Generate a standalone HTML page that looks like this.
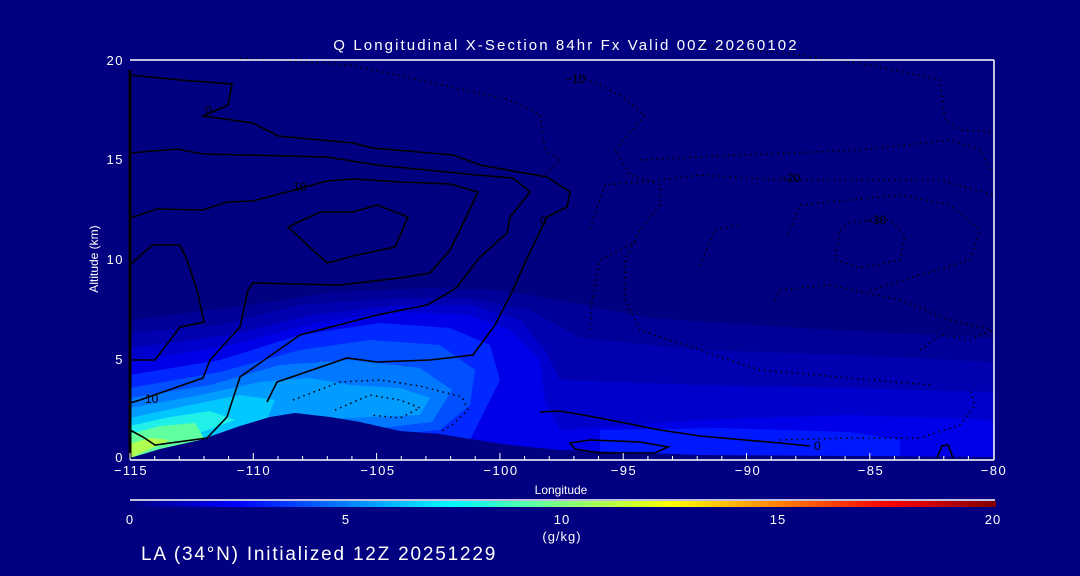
<!DOCTYPE html>
<html><head><meta charset="utf-8"><style>
html,body{margin:0;padding:0;background:#000080;}
svg{display:block}
text{font-family:"Liberation Sans",sans-serif;fill:#fff}
</style></head><body>
<svg width="1080" height="576" viewBox="0 0 1080 576" xmlns="http://www.w3.org/2000/svg">
<defs>
<linearGradient id="cb" x1="0" x2="1" y1="0" y2="0">
<stop offset="0" stop-color="#000080"/>
<stop offset="0.125" stop-color="#0000ff"/>
<stop offset="0.375" stop-color="#00ffff"/>
<stop offset="0.5" stop-color="#7fff7f"/>
<stop offset="0.625" stop-color="#ffff00"/>
<stop offset="0.875" stop-color="#ff0000"/>
<stop offset="1" stop-color="#800000"/>
</linearGradient>
</defs>
<rect width="1080" height="576" fill="#000080"/>
<g stroke="none">
<polygon fill="#000098" points="130,320 250,305 330,292 430,288 500,290 560,300 650,318 800,328 993,338 993,458 130,458"/>
<polygon fill="#0000b0" points="130,333 220,325 300,305 400,298 470,298 530,310 580,338 700,350 850,355 993,362 993,458 130,458"/>
<polygon fill="#0000cc" points="130,348 230,335 310,315 400,305 470,305 520,320 545,350 560,380 700,385 850,388 993,392 993,458 130,458"/>
<polygon fill="#0000e8" points="130,362 230,345 320,322 400,312 470,315 510,330 540,360 545,400 560,430 700,420 850,415 993,420 993,458 130,458"/>
<polygon fill="#0018ff" points="600,430 720,428 850,432 900,440 900,458 600,458"/>
<polygon fill="#0028ff" points="130,375 220,360 300,335 380,323 450,328 490,345 500,380 480,420 470,440 130,458"/>
<polygon fill="#0050ff" points="130,388 220,372 300,350 370,340 440,345 475,370 470,405 440,430 130,458"/>
<polygon fill="#0078ff" points="130,398 210,385 280,365 350,360 420,368 452,390 432,422 130,458"/>
<polygon fill="#009cff" points="130,408 200,395 260,382 310,378 350,385 400,388 430,398 420,415 300,420 130,458"/>
<polygon fill="#00c8ff" points="130,418 190,405 240,395 275,400 265,425 130,458"/>
<polygon fill="#20f0e8" points="130,426 170,417 210,411 235,420 130,458"/>
<polygon fill="#60ffa0" points="130,434 160,426 195,423 205,440 130,458"/>
<polygon fill="#b0ff50" points="130,444 150,438 170,440 130,458"/>
<polygon fill="#000080" points="130,458 160,449 200,440 240,426 270,417 295,413 330,417 360,422 400,431 440,434 470,439 510,445 560,450 700,455 993,457 993,461 130,461"/>
</g>
<g fill="none" stroke="#000" stroke-width="1.6">
<polyline points="130,75 180,80 232,84 228,105 203,116 253,123 278,136 353,143 373,148 453,155 480,165 547,177 570,192 567,207 547,217 523,267 513,290 495,325 473,355 430,360 377,362 347,358 312,370 277,382 267,402"/>
<polyline points="130,153 177,149 203,154 327,157 377,165 427,170 477,175 513,178 530,192 510,217 507,233 480,257 457,287 453,290 427,305 377,315 300,335 240,377 227,417 207,438 155,445 143,437 130,430"/>
<polyline points="130,218 157,209 203,210 227,202 253,201 283,193 327,181 353,179 400,182 450,184 478,192 460,230 450,250 430,273 400,278 340,285 253,283 248,290 240,327 210,360 203,378 160,393 140,400 130,403"/>
<polygon points="288,227 320,212 353,212 377,205 408,217 395,247 357,255 327,263"/>
<polyline points="130,265 152,245 180,245 187,260 197,290 204,322 180,327 155,360 130,360"/>
<polyline points="540,412 560,411 600,418 660,430 700,436 780,443 810,446"/>
<polygon points="570,443 590,440 640,442 668,447 655,453 600,453 575,449"/>
<polyline points="937,458 942,446 948,445 953,458"/>
<line x1="130" y1="70" x2="130" y2="458" stroke-width="3"/>
</g>
<g fill="none" stroke="#000" stroke-width="1.5" stroke-dasharray="1.5 4">
<polyline points="240,58 350,65 420,80 510,100 540,115 545,150 560,160 545,175"/>
<polyline points="585,78 620,95 645,115 615,150 630,175 660,185 660,205 640,230 625,260 625,300 640,330 700,350 760,370 850,378 930,385"/>
<polyline points="700,45 800,55 870,65 940,80 945,120 960,130 993,132"/>
<polyline points="640,160 740,155 860,150 950,140 980,150 990,170"/>
<polyline points="590,228 605,185 660,180 700,175 780,180 850,180 940,180 993,195"/>
<polyline points="788,235 800,205 900,195 950,205 980,230 970,260 920,275 870,290"/>
<polygon points="840,230 850,222 890,220 905,235 900,260 860,268 835,260"/>
<polyline points="700,265 715,230 740,225"/>
<polyline points="775,300 780,290 830,285 900,300 950,320 993,330"/>
<polyline points="590,330 592,300 600,260 640,240"/>
<polyline points="293,400 340,382 380,380 420,386 462,397 468,410 452,425 440,432"/>
<polyline points="335,410 370,395 400,400 420,408 400,418 370,415"/>
<polyline points="780,440 850,438 920,438 960,425 975,405 970,390"/>
<polyline points="920,350 940,335 970,340 993,330"/>
</g>
<g font-size="12">
<text x="205" y="114" style="fill:#000">0</text>
<text x="293" y="191" style="fill:#000">10</text>
<text x="145" y="403" style="fill:#000">10</text>
<text x="814" y="450" style="fill:#000">0</text>
<text x="780" y="182" style="fill:#000">−20</text>
<text x="866" y="224" style="fill:#000">−30</text>
<text x="565" y="83" style="fill:#000">−10</text>
<text x="540" y="225" style="fill:#000">0</text>
</g>
<g stroke="#fff" stroke-width="1.5" fill="none">
<line x1="130" y1="60" x2="994" y2="60"/>
<line x1="994" y1="60" x2="994" y2="460"/>
<line x1="130" y1="460" x2="994" y2="460"/>
</g>
<g stroke="#fff" stroke-width="1">
<line x1="130" y1="460" x2="130" y2="453"/><line x1="154.7" y1="460" x2="154.7" y2="456"/><line x1="179.3" y1="460" x2="179.3" y2="456"/><line x1="204" y1="460" x2="204" y2="456"/><line x1="228.6" y1="460" x2="228.6" y2="456"/>
<line x1="253.3" y1="460" x2="253.3" y2="453"/><line x1="278" y1="460" x2="278" y2="456"/><line x1="302.6" y1="460" x2="302.6" y2="456"/><line x1="327.3" y1="460" x2="327.3" y2="456"/><line x1="351.9" y1="460" x2="351.9" y2="456"/>
<line x1="376.6" y1="460" x2="376.6" y2="453"/><line x1="401.3" y1="460" x2="401.3" y2="456"/><line x1="425.9" y1="460" x2="425.9" y2="456"/><line x1="450.6" y1="460" x2="450.6" y2="456"/><line x1="475.2" y1="460" x2="475.2" y2="456"/>
<line x1="499.9" y1="460" x2="499.9" y2="453"/><line x1="524.6" y1="460" x2="524.6" y2="456"/><line x1="549.2" y1="460" x2="549.2" y2="456"/><line x1="573.9" y1="460" x2="573.9" y2="456"/><line x1="598.5" y1="460" x2="598.5" y2="456"/>
<line x1="623.2" y1="460" x2="623.2" y2="453"/><line x1="647.9" y1="460" x2="647.9" y2="456"/><line x1="672.5" y1="460" x2="672.5" y2="456"/><line x1="697.2" y1="460" x2="697.2" y2="456"/><line x1="721.8" y1="460" x2="721.8" y2="456"/>
<line x1="746.5" y1="460" x2="746.5" y2="453"/><line x1="771.2" y1="460" x2="771.2" y2="456"/><line x1="795.8" y1="460" x2="795.8" y2="456"/><line x1="820.5" y1="460" x2="820.5" y2="456"/><line x1="845.1" y1="460" x2="845.1" y2="456"/>
<line x1="869.8" y1="460" x2="869.8" y2="453"/><line x1="894.5" y1="460" x2="894.5" y2="456"/><line x1="919.1" y1="460" x2="919.1" y2="456"/><line x1="943.8" y1="460" x2="943.8" y2="456"/><line x1="968.4" y1="460" x2="968.4" y2="456"/>
</g>
<g font-size="13" letter-spacing="1.5">
<text x="131" y="475" text-anchor="middle">−115</text>
<text x="254" y="475" text-anchor="middle">−110</text>
<text x="378" y="475" text-anchor="middle">−105</text>
<text x="501" y="475" text-anchor="middle">−100</text>
<text x="624" y="475" text-anchor="middle">−95</text>
<text x="748" y="475" text-anchor="middle">−90</text>
<text x="871" y="475" text-anchor="middle">−85</text>
<text x="994" y="475" text-anchor="middle">−80</text>
<text x="124" y="65" text-anchor="end">20</text>
<text x="124" y="164" text-anchor="end">15</text>
<text x="124" y="264" text-anchor="end">10</text>
<text x="124" y="364" text-anchor="end">5</text>
<text x="124" y="462" text-anchor="end">0</text>
</g>
<text x="98" y="259" font-size="12" text-anchor="middle" transform="rotate(-90 98 259)">Altitude (km)</text>
<text x="561" y="494" font-size="12" text-anchor="middle">Longitude</text>
<text x="566" y="50" font-size="15" letter-spacing="2.1" text-anchor="middle">Q Longitudinal X-Section 84hr  Fx Valid 00Z 20260102</text>
<line x1="130" y1="500" x2="995" y2="500" stroke="#fff" stroke-width="1.5"/>
<rect x="130" y="501" width="866" height="6" fill="url(#cb)"/>
<g font-size="13" letter-spacing="1">
<text x="130" y="524" text-anchor="middle">0</text>
<text x="346" y="524" text-anchor="middle">5</text>
<text x="562" y="524" text-anchor="middle">10</text>
<text x="778" y="524" text-anchor="middle">15</text>
<text x="993" y="524" text-anchor="middle">20</text>
<text x="562" y="541" text-anchor="middle">(g/kg)</text>
</g>
<text x="141" y="560" font-size="19" letter-spacing="1.8">LA (34°N) Initialized 12Z 20251229</text>
</svg>
</body></html>
